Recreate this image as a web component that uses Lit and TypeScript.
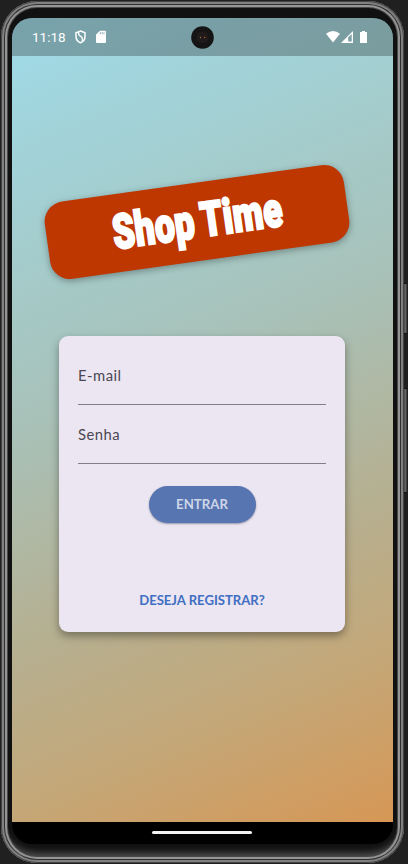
import { LitElement, html, css } from "lit";
import { customElement } from "lit/decorators.js";

@customElement("app-root")
export class AppRoot extends LitElement {
  static styles = css`
    :host { display: block; width: 408px; height: 864px; background: #202020; overflow: hidden; position: relative; font-family: Lato, sans-serif; }
    * { box-sizing: border-box; }
    .side { position: absolute; left: 403px; width: 4px; background: linear-gradient(90deg, #333, #666 60%, #333); border: solid #111; border-width: 1px 0; }
    .power { top: 283px; height: 51px; }
    .volume { top: 388px; height: 105px; }
    .frame { position: absolute; inset: 1px 4px 1px 1px; border-radius: 36px; background: #111;
      box-shadow: inset 0 0 0 1px #444, inset 0 0 0 3px #808080, inset 0 0 0 4px #303030, inset 0 0 0 6px #949494, inset 0 0 0 7px #484848, inset 0 -12px 7px -2px #505050; padding: 17px 11px 18px 11px; }
    .screen { width: 381px; height: 826px; border-radius: 20px; overflow: hidden; background: #000; display: flex; flex-direction: column; }
    .app { height: 804px; background: linear-gradient(157deg, #9fdbe9 0%, #a3cfd2 20%, #a8c1b8 43%, #b7ae8d 68%, #c3a87a 81%, #d69755 100%); display: flex; flex-direction: column; align-items: center; }
    .status { position: relative; width: 100%; height: 37.5px; flex: none; background: rgba(66, 86, 88, 0.42); display: flex; align-items: center; padding: 0 25px 0 20px; color: #fff; }
    .time { font: 13.5px/38px Roboto, sans-serif; width: 43px; }
    .camera { position: absolute; left: 179px; top: 7.5px; }
    .spacer { flex: 1; }
    .logo { width: 302px; height: 78px; flex: none; border-radius: 20px; background: #be3600; margin: 127.5px 11.5px 0 0; transform: rotate(-8deg); box-shadow: 0 2px 7px rgba(0,0,0,.33); display: flex; align-items: center; justify-content: center; }
    .brand { color: #fff; font: 900 48px/60px Roboto, sans-serif; white-space: pre; transform: translate(.5px, -.5px) scaleX(.73); letter-spacing: .4px; word-spacing: -2px; -webkit-text-stroke: 2.4px #fff; paint-order: stroke fill; }
    .card { width: 286px; height: 296px; flex: none; margin: 74.5px 1px 0 0; border-radius: 9px; background: #ebe6f1; box-shadow: 0 4px 9px rgba(0,0,0,.36); padding: 10px 19px; display: flex; flex-direction: column; align-items: center; }
    .field { width: 100%; height: 59.25px; border-bottom: 1px solid #837e88; color: #4b4653; font-size: 14.8px; line-height: 58.5px; letter-spacing: .5px; flex: none; }
    .enter { width: 107px; height: 37px; margin-top: 21.5px; border-radius: 19px; background: #5775b1; color: #ced5e8; font: 700 13.2px/37px Lato, sans-serif; text-align: center; flex: none; box-shadow: 0 1px 2px rgba(50,50,90,.45); }
    .register { margin-top: 66.5px; color: #416fc3; font: 700 13.1px/22px Lato, sans-serif; white-space: nowrap; }
    .home { width: 100px; height: 3px; border-radius: 1.5px; background: #f2f2f2; margin: 9px 0 0 140px; }
  `;

  render() {
    return html`
      <div class="side power"></div><div class="side volume"></div>
      <div class="frame"><div class="screen">
        <div class="app">
          <div class="status">
            <span class="time">11:18</span>
            <svg width="33" height="16" viewBox="0 0 33 16">
              <path d="M5.5 2L10 3.7V7.2C10 10.3 8.2 12.7 5.5 13.8C2.8 12.7 1 10.3 1 7.2V3.7Z" fill="none" stroke="#fff" stroke-width="1.5"/>
              <path d="M3.6 3V5.2Q3.8 6.2 5.5 7.2Q7.4 8.2 7.4 9.8V12" fill="none" stroke="#fff" stroke-width="1.4"/>
              <path d="M25 1.8H30Q31 1.8 31 2.8V13Q31 14 30 14H22Q21 14 21 13V5.5Z" fill="#fff"/>
              <path d="M25.4 3.2V5.2M27.2 3.2V5.2M29 3.2V5.2" stroke="#7a9ea8" stroke-width=".8"/>
            </svg>
            <span class="spacer"></span>
            <svg width="42" height="16" viewBox="0 0 42 16">
              <path d="M0 4.8Q7 -.9 14 4.8L7 13.5Z" fill="#fff"/>
              <path d="M15 14L27 2V14Z" fill="#fff"/><path d="M22.2 8.6L25.7 5V12.6H22.2Z" fill="#7a9ea4"/>
              <path d="M36 2H39V3H41V14H34V3H36Z" fill="#fff"/>
            </svg>
            <svg class="camera" width="23" height="23" viewBox="0 0 23 23">
              <circle cx="11.5" cy="11.5" r="11.3" fill="#151515"/><circle cx="11.5" cy="11.5" r="6" fill="#201b1a"/>
              <circle cx="9.5" cy="11.5" r=".7" fill="#8a7a50"/><circle cx="13.7" cy="11.5" r=".8" fill="#a0522d"/>
            </svg>
          </div>
          <div class="logo"><span class="brand">Shop Time</span></div>
          <div class="card">
            <div class="field">E-mail</div>
            <div class="field">Senha</div>
            <div class="enter">ENTRAR</div>
            <div class="register">DESEJA REGISTRAR?</div>
          </div>
        </div>
        <div class="home"></div>
      </div></div>`;
  }
}
